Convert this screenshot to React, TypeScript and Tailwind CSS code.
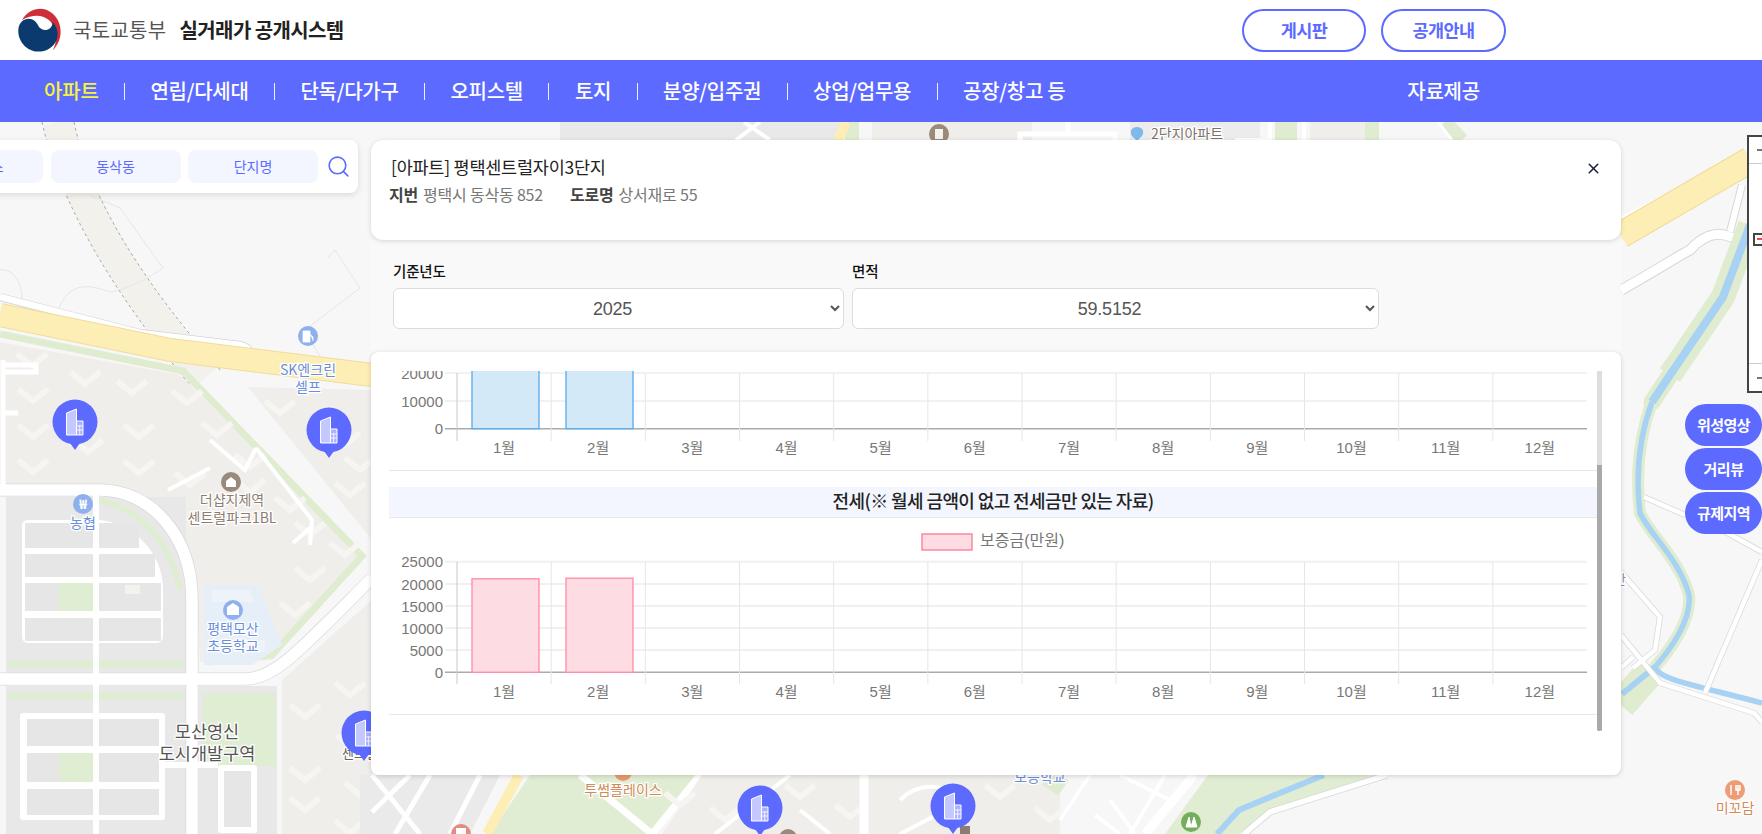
import { Search, X } from 'lucide-react';

const navItems = ['연립/다세대', '단독/다가구', '오피스텔', '토지', '분양/입주권', '상업/업무용', '공장/창고 등'];
const months = ['1월', '2월', '3월', '4월', '5월', '6월', '7월', '8월', '9월', '10월', '11월', '12월'];

const chevrons = [
  [32, 361], [85, 379], [132, 388], [33, 396], [33, 432], [139, 432], [33, 467], [139, 468], [88, 447],
  [187, 398], [217, 430], [250, 462], [190, 480], [250, 487], [290, 505], [310, 530], [345, 550], [310, 575],
  [295, 610], [345, 440], [360, 465], [350, 490], [280, 408], [305, 712], [350, 690], [305, 775], [352, 742],
  [305, 805], [360, 790], [350, 828], [680, 800], [725, 815], [800, 792], [850, 812], [1000, 792], [1050, 815], [1115, 795],
];

const cellRows = [
  { y: 523, h: 25 },
  { y: 554, h: 23 },
  { y: 583, h: 28 },
  { y: 618, h: 23 },
];
const lowerRows = [
  { y: 719, h: 27 },
  { y: 753, h: 29 },
  { y: 789, h: 26 },
];

const rightRoads = 'M1644 497 L1685 515 M1722 530 L1762 552 M1762 560 L1705 693 M1621 572 L1660 617 L1655 650 L1633 668 M1621 635 L1660 683 L1754 713 L1762 722 M1621 668 L1633 657';

function Pin({ x, y }: { x: number; y: number }) {
  return (
    <g transform={`translate(${x} ${y})`}>
      <path d="M-5 21 L0 28 L5 21 Z" fill="#5c6aff" />
      <ellipse rx="22.5" ry="22.5" fill="#5c6aff" />
      <path d="M-8.5 -9 L1.5 -13 L1.5 13 L-8.5 13 Z" fill="#c3c9ff" stroke="#fff" />
      <path d="M1.5 -1 L8 -1 L8 13 L1.5 13 Z" fill="#aab2ff" stroke="#fff" />
      <path d="M4.7 3 V13 M1.5 4 H8 M1.5 8 H8" stroke="#fff" strokeWidth="0.8" />
    </g>
  );
}

function MapLabel({ x, y, color, size = 14, children }: { x: number; y: number; color: string; size?: number; children: string }) {
  return (
    <text x={x} y={y} fill={color} fontSize={size} textAnchor="middle" stroke="#fff" strokeWidth={2.5} paintOrder="stroke">
      {children}
    </text>
  );
}

function MapBackground() {
  return (
    <svg
      viewBox="0 122 1762 712"
      className="absolute inset-0 h-[712px] w-[1762px] font-['Noto_Sans_CJK_KR',sans-serif]"
    >
      <rect x="0" y="122" width="1762" height="712" fill="#f7f7f7" />

      {/* 왼쪽 위 산길 */}
      <path d="M58 122 C75 200 130 290 205 378" fill="none" stroke="#f2f1ec" strokeWidth="30" />
      <path d="M42 122 C60 205 115 295 190 385" fill="none" stroke="#a8a8a8" strokeWidth="1" strokeDasharray="3 3" />
      <path d="M74 122 C90 200 145 285 222 372" fill="none" stroke="#a8a8a8" strokeWidth="1" strokeDasharray="3 3" />
      <path d="M0 270 C15 268 22 285 22 300 M58 310 C70 280 90 285 110 292 C135 288 160 270 163 268 L120 208 L90 195" fill="none" stroke="#e6e6e6" />
      <path d="M305 330 L360 288 L335 250 L330 255 L328 258 M305 330 L322 360" fill="none" stroke="#e6e6e6" />

      {/* 아파트 단지 */}
      <path d="M0 342 L180 375 L362 556 L272 660 L200 662 L196 580 L165 520 L105 487 L0 487 Z" fill="#f0eeeb" />
      <path d="M248 387 L372 390 L372 540 Z" fill="#f0eeeb" />
      <path d="M282 680 L372 600 L372 834 L282 834 Z" fill="#f0eeeb" />
      <path d="M0 334 L183 371 L362 556 L272 655 L208 662" fill="none" stroke="#dfeccf" strokeWidth="7" />

      {/* 건물 */}
      {chevrons.map(([x, y]) => (
        <path
          key={`${x}-${y}`}
          d={`M${x - 15} ${y - 7} L${x} ${y + 5} L${x + 15} ${y - 7}`}
          fill="none"
          stroke="#f6f5f2"
          strokeWidth="6"
        />
      ))}

      {/* 왼쪽 아래 구역 */}
      <rect x="6" y="497" width="180" height="177" fill="#e8e8e8" />
      <rect x="6" y="686" width="180" height="148" fill="#e8e8e8" />
      <rect x="199" y="686" width="78" height="148" fill="#e8e8e8" />
      <rect x="203" y="693" width="73" height="73" fill="#dfeed2" />
      <path d="M8 664 H183 M8 696 H183" stroke="#dfeed2" strokeWidth="7" />
      <path d="M99 500 C140 510 170 540 180 590" fill="none" stroke="#dfeed2" strokeWidth="6" />
      <path d="M204 585 L258 585 L282 645 L252 665 L204 665 Z" fill="#e6eef7" />
      <path d="M212 590 H250 L254 602 H212 Z M235 640 H265 V652 H235 Z" fill="#eef3f9" />

      {/* 큰 길 */}
      <path d="M0 490 H100 C150 490 192 535 192 600 V834" fill="none" stroke="#d8d8d8" strokeWidth="13" />
      <path d="M0 679 H245 C275 679 300 650 372 578" fill="none" stroke="#dcdcdc" strokeWidth="13" />
      <path d="M0 490 H100 C150 490 192 535 192 600 V834" fill="none" stroke="#fff" strokeWidth="11.5" />
      <path d="M0 679 H245 C275 679 300 650 372 578" fill="none" stroke="#fff" strokeWidth="11.5" />
      <path d="M0 297 L140 333 L240 345 C248 347 250 350 251 356" fill="none" stroke="#d5d5d5" strokeWidth="8" />
      <path d="M0 297 L140 333 L240 345 C248 347 250 350 251 356" fill="none" stroke="#fff" strokeWidth="6.5" />
      <path d="M0 315 L170 350 L372 375" fill="none" stroke="#f0dc9c" strokeWidth="24" />
      <path d="M0 315 L170 350 L372 375" fill="none" stroke="#fdeeb5" strokeWidth="22" />
      <path d="M3 360 V490 M3 365 H36 V372 H3 M3 413 H18" fill="none" stroke="#fff" strokeWidth="5" />

      {/* 단지 안쪽 길 */}
      <path d="M168 490 L210 468 M210 440 L245 470 L256 448 M256 448 L312 520 L310 545 M310 528 L293 543" fill="none" stroke="#fff" strokeWidth="4" />

      {/* 블록 */}
      <path d="M28 520 H99 C130 522 163 550 163 590 V636 Q163 643 156 643 H28 Q22 643 22 636 V526 Q22 520 28 520 Z" fill="#fff" />
      {cellRows.map((r) => (
        <g key={r.y}>
          <rect x="25" y={r.y} width="68" height={r.h} fill="#e6e6e6" />
          <rect x="99" y={r.y} width={r.y === 523 ? 40 : r.y === 554 ? 56 : 62} height={r.h} fill="#e6e6e6" />
        </g>
      ))}
      <rect x="59" y="583" width="34" height="28" fill="#dfeed2" />
      <rect x="125" y="585" width="15" height="9" fill="#f4f2ee" />
      <rect x="20" y="713" width="145" height="107" rx="3" fill="#fff" />
      {lowerRows.map((r) => (
        <g key={r.y}>
          <rect x="27" y={r.y} width="66" height={r.h} fill="#e6e6e6" />
          <rect x="99" y={r.y} width="60" height={r.h} fill="#e6e6e6" />
        </g>
      ))}
      <rect x="59" y="753" width="34" height="29" fill="#dfeed2" />
      <path d="M96 490 V834" stroke="#fff" strokeWidth="6" />
      <rect x="218" y="765" width="39" height="68" rx="3" fill="#fff" />
      <rect x="224" y="771" width="27" height="56" fill="#e6e6e6" />
      <path d="M165 765 H218" stroke="#fff" strokeWidth="6" />

      {/* 위쪽 띠 */}
      <rect x="400" y="122" width="190" height="18" fill="#f7f7f7" />
      <rect x="560" y="122" width="280" height="18" fill="#e9e9e9" />
      <path d="M744 122 L770 140 M760 122 L736 140" stroke="#fff" strokeWidth="4" />
      <rect x="845" y="122" width="14" height="18" fill="#dfeccf" />
      <path d="M846 122 L838 140" stroke="#fdeeb5" strokeWidth="10" />
      <rect x="872" y="122" width="160" height="18" fill="#f0eeeb" />
      <path d="M1020 140 V134 H1115 V140 M1068 122 V134" fill="none" stroke="#fff" strokeWidth="5" />
      <rect x="1130" y="122" width="130" height="18" fill="#ececec" />
      <path d="M1235 140 H1270 M1270 122 V140 M1304 122 V140" stroke="#fff" strokeWidth="4" />
      <rect x="1275" y="122" width="22" height="18" fill="#dfeccf" />
      <rect x="1365" y="122" width="14" height="18" fill="#dfeccf" />
      <rect x="1310" y="122" width="55" height="18" fill="#f0eeeb" />
      <path d="M1445 122 L1462 140" stroke="#dfeccf" strokeWidth="14" />
      <path d="M1438 122 L1452 140" stroke="#fff" strokeWidth="3" />
      <circle cx="939" cy="134" r="10" fill="#9a8a7c" />
      <rect x="935" y="129" width="8" height="10" fill="#f3f1ee" />
      <path d="M1137 127 C1142 127 1145 131 1142 136 L1137 141 L1132 136 C1129 131 1132 127 1137 127 Z" fill="#7fb9ea" />
      <MapLabel x={1187} y={139} color="#7d7268">2단지아파트</MapLabel>

      {/* 오른쪽 지도 */}
      <path d="M1621 290 C1640 280 1680 255 1690 250 C1710 228 1725 232 1747 245" fill="none" stroke="#d8d8d8" strokeWidth="11" />
      <path d="M1621 290 C1640 280 1680 255 1690 250 C1710 228 1725 232 1747 245" fill="none" stroke="#fff" strokeWidth="9" />
      <path d="M1730 232 L1742 185" fill="none" stroke="#d8d8d8" strokeWidth="8" />
      <path d="M1730 232 L1742 185" fill="none" stroke="#fff" strokeWidth="6" />
      <path d="M1621 220 L1665 198 L1690 210" fill="none" stroke="#fff" strokeWidth="7" />
      <path d="M1621 235 L1750 160" fill="none" stroke="#f0dc9c" strokeWidth="27" />
      <path d="M1621 235 L1750 160" fill="none" stroke="#fdeeb5" strokeWidth="25" />
      <path d="M1750 225 L1723 297 L1670 375" fill="none" stroke="#dfeccf" strokeWidth="24" strokeLinejoin="round" />
      <path d="M1670 375 L1652 402" fill="none" stroke="#dfeccf" strokeWidth="17" strokeLinecap="round" />
      <path d="M1652 402 C1638 440 1636 480 1640 513 C1650 535 1680 560 1689 595 C1692 620 1670 650 1655 667 L1622 700" fill="none" stroke="#dfeccf" strokeWidth="12" strokeLinejoin="round" strokeLinecap="round" />
      <path d="M1621 705 L1650 672" stroke="#dfeccf" strokeWidth="30" />
      <path d="M1750 225 L1723 297 L1670 375 L1652 402" fill="none" stroke="#a8d2f3" strokeWidth="8" strokeLinejoin="round" />
      <path d="M1652 402 C1638 440 1636 480 1640 513 C1650 535 1680 560 1689 595 C1692 620 1670 650 1655 667 C1660 680 1690 684 1762 703" fill="none" stroke="#a8d2f3" strokeWidth="5.5" strokeLinejoin="round" />
      <path d="M1655 667 L1622 694" stroke="#a8d2f3" strokeWidth="6" />
      <path d={rightRoads} fill="none" stroke="#d8d8d8" strokeWidth="6" />
      <path d={rightRoads} fill="none" stroke="#fff" strokeWidth="4.5" />

      {/* 아래쪽 띠 */}
      <path d="M360 775 H500 L470 834 H360 Z" fill="#eaeaea" />
      <path d="M372 775 L420 834 M430 775 L395 834 M480 775 L450 834 M410 775 L372 812" stroke="#fff" strokeWidth="5" />
      <path d="M530 775 H580 L650 834 H490 Z" fill="#e1edd2" />
      <path d="M580 775 H700 L655 834 H650 Z" fill="#e1edd2" />
      <path d="M519 775 L487 834" stroke="#fdeeb5" strokeWidth="10" />
      <path d="M580 775 L652 834 M700 775 L652 834" fill="none" stroke="#fff" strokeWidth="7" />
      <path d="M702 775 H1190 L1145 834 H662 Z" fill="#f0eeeb" />
      {chevrons.slice(-7).map(([x, y]) => (
        <path key={`b${x}`} d={`M${x - 15} ${y - 7} L${x} ${y + 5} L${x + 15} ${y - 7}`} fill="none" stroke="#f6f5f2" strokeWidth="6" />
      ))}
      <path d="M864 775 V834" stroke="#fff" strokeWidth="9" />
      <path d="M790 775 L715 834 M800 810 L830 834 M900 800 C920 780 950 785 965 800 L900 834" fill="none" stroke="#fff" strokeWidth="4" />
      <rect x="1060" y="775" width="130" height="59" fill="#f7f7f7" />
      <path d="M1090 775 L1060 820 M1120 775 L1170 800 M1110 800 L1135 834 M1095 815 L1120 834 M1165 775 L1130 834" fill="none" stroke="#fff" strokeWidth="4" />
      <path d="M1208 775 H1380 L1275 808 L1240 834 H1165 Z" fill="#e1edd2" />
      <path d="M1194 775 L1145 834" stroke="#fff" strokeWidth="9" />
      <path d="M1387 775 L1270 812 L1244 834" fill="none" stroke="#d8d8d8" strokeWidth="7" />
      <path d="M1387 775 L1270 812 L1244 834" fill="none" stroke="#fff" strokeWidth="5.5" />
      <path d="M1324 775 L1275 795 L1239 810 L1217 834" fill="none" stroke="#a8d2f3" strokeWidth="6" />
      <path d="M1060 775 L1050 790" stroke="#dfeccf" strokeWidth="20" />

      {/* 아이콘, 지명 */}
      <circle cx="308" cy="336" r="10" fill="#8fb0ee" />
      <path d="M303 331 H310 V342 H303 Z M310 334 L313 337 V341" fill="#fff" stroke="#fff" strokeWidth="0.8" />
      <MapLabel x={308} y={375} color="#6a8ed8">SK엔크린</MapLabel>
      <MapLabel x={308} y={392} color="#6a8ed8">셀프</MapLabel>
      <circle cx="83" cy="504" r="10" fill="#8fb0ee" />
      <text x="83" y="509" fill="#fff" fontSize="13" fontWeight="700" textAnchor="middle">₩</text>
      <MapLabel x={83} y={528} color="#6a8ed8">농협</MapLabel>
      <circle cx="231" cy="482" r="10" fill="#9a8a7c" />
      <path d="M226 481 L231 477 L236 481 V487 H226 Z" fill="#fff" />
      <MapLabel x={232} y={505} color="#8c7d70">더샵지제역</MapLabel>
      <MapLabel x={232} y={523} color="#8c7d70">센트럴파크1BL</MapLabel>
      <circle cx="233" cy="610" r="10" fill="#8fb0ee" />
      <path d="M227 607 L233 603 L239 607 V615 H227 Z" fill="#fff" />
      <MapLabel x={233} y={634} color="#6a8ed8">평택모산</MapLabel>
      <MapLabel x={233} y={651} color="#6a8ed8">초등학교</MapLabel>
      <MapLabel x={207} y={738} color="#555" size={17.5}>모산영신</MapLabel>
      <MapLabel x={207} y={760} color="#555" size={17.5}>도시개발구역</MapLabel>
      <MapLabel x={360} y={758} color="#666" size={13}>센트럴</MapLabel>
      <circle cx="623" cy="772" r="9" fill="#ea9a6e" />
      <MapLabel x={623} y={795} color="#d08b58">투썸플레이스</MapLabel>
      <MapLabel x={1040} y={782} color="#6a8ed8">보등학교</MapLabel>
      <MapLabel x={1620} y={584} color="#8c8ca8" size={13}>만</MapLabel>
      <circle cx="461" cy="834" r="10" fill="#e58a80" />
      <rect x="456" y="828" width="10" height="8" fill="#fff" />
      <circle cx="788" cy="838" r="9" fill="#9a8a7c" />
      <rect x="960" y="826" width="10" height="8" fill="#8c7d70" />
      <circle cx="1191" cy="822" r="10" fill="#74ad5c" />
      <path d="M1186 827 L1189 817 L1191 827 Z M1191 827 L1194 817 L1197 827 Z" fill="#fff" stroke="#fff" />
      <circle cx="1735" cy="790" r="10" fill="#ee9c74" />
      <path d="M1731 785 V795 M1738 785 V795 M1736 785 V790 H1740 V785" fill="none" stroke="#fff" strokeWidth="1.5" />
      <MapLabel x={1735} y={813} color="#d08b58">미꼬담</MapLabel>

      <Pin x={75} y={422} />
      <Pin x={329} y={430} />
      <Pin x={364} y={733} />
      <Pin x={760} y={808} />
      <Pin x={953} y={806} />
    </svg>
  );
}

function ChartGrid({
  top,
  height,
  zero,
  ticks,
  bars,
  fill,
  stroke,
  tickY,
  labelY,
  gridClass,
  children,
}: {
  top: number;
  height: number;
  zero: number;
  ticks: { label: string; y: number }[];
  bars: number[];
  fill: string;
  stroke: string;
  tickY: number;
  labelY: number;
  gridClass: number;
  children?: React.ReactNode;
}) {
  const gridTop = ticks[ticks.length - 1].y;
  return (
    <svg
      viewBox={`389 ${top} 1208 ${height}`}
      style={{ height }}
      className="block w-[1208px] font-['Liberation_Sans','Noto_Sans_CJK_KR',sans-serif]"
    >
      {children}
      {ticks.map((t) => (
        <g key={t.label}>
          <path d={`M445 ${t.y} H1587`} stroke={t.label === '0' ? '#ababab' : gridClass === 2 ? '#f0f0f0' : '#e4e4e4'} strokeWidth={t.label === '0' ? 1.5 : gridClass} />
          <text x="443" y={t.y + 5.5} fill="#777" fontSize="15" textAnchor="end">
            {t.label}
          </text>
        </g>
      ))}
      {months.map((m, i) => {
        const x = 457 + i * 94.17;
        return (
          <g key={m}>
            <path d={`M${x} ${gridTop} V${tickY}`} stroke={i === 0 ? '#c8c8c8' : '#e6e6e6'} />
            <text x={x + 47} y={labelY} fill="#777" fontSize="15" textAnchor="middle">
              {m}
            </text>
          </g>
        );
      })}
      {bars.map((y, i) => (
        <rect
          key={i}
          x={472 + i * 94}
          y={y}
          width={67}
          height={zero - y}
          fill={fill}
          stroke={stroke}
          strokeWidth="1.4"
        />
      ))}
    </svg>
  );
}

export default function App() {
  return (
    <div className="flex h-[834px] w-full flex-col overflow-hidden bg-white font-['Noto_Sans_CJK_KR',sans-serif]">
      <header className="flex h-[60px] items-center bg-white pl-[16px] pr-[256px]">
        <svg viewBox="0 0 100 100" className="h-[46px] w-[46px]">
          <path d="M13 28 C26 6 48 0 66 6 C86 14 98 34 97 56 C96 72 90 84 80 94 C88 78 90 62 84 46 C76 24 50 8 13 28 Z" fill="#cd2e3a" />
          <path d="M5 52 C5 38 12 28 24 26 C36 24 44 32 48 40 C53 50 66 53 74 46 C79 41 80 36 79 32 C90 44 93 58 89 70 C82 88 66 97 48 97 C24 96 5 76 5 52 Z" fill="#0b3b6e" />
        </svg>
        <span className="ml-[11px] text-[20px] tracking-[0.3px] text-[#555]">국토교통부</span>
        <span className="ml-[13px] text-[20px] font-bold tracking-[-0.6px] text-[#222]">실거래가 공개시스템</span>
        <div className="ml-auto flex gap-[15px]">
          <button className="h-[43px] w-[124px] rounded-full border-2 border-[#5c6aff] bg-white text-[17.5px] font-bold tracking-[-0.6px] text-[#5c6aff]">
            게시판
          </button>
          <button className="h-[43px] w-[125px] rounded-full border-2 border-[#5c6aff] bg-white text-[17.5px] font-bold tracking-[-0.6px] text-[#5c6aff]">
            공개안내
          </button>
        </div>
      </header>

      <nav className="flex h-[62px] items-center bg-[#5c6aff] pl-[18px] pr-[282px] text-[20px] font-medium leading-none text-white">
        <span className="w-[106px] px-[26px] whitespace-nowrap tracking-[-0.2px] text-[#f5f53c]">아파트</span>
        {navItems.map((item) => (
          <div key={item} className="flex items-center">
            <span className="h-[17px] w-px bg-white/90" />
            <span className="px-[25.5px] whitespace-nowrap tracking-[-0.3px]">{item}</span>
          </div>
        ))}
        <span className="ml-auto tracking-[-0.2px]">자료제공</span>
      </nav>

      <main className="relative flex-1 overflow-hidden">
        <MapBackground />

        <div className="absolute inset-0 flex items-start pt-[18px]">
          <div className="-ml-[110px] flex h-[53px] w-[468px] shrink-0 items-center gap-[7.5px] rounded-lg bg-white pl-[23px] shadow-[0_2px_6px_rgba(0,0,0,0.12)]">
            {['아파트스', '동삭동', '단지명'].map((label) => (
              <div key={label} className="flex h-[33px] w-[130px] items-center justify-center rounded-lg bg-[#f3f6ff] text-[14px] text-[#5c6aff]">
                {label}
              </div>
            ))}
            <Search size={25} strokeWidth={1.5} className="text-[#5c6aff]" />
          </div>

          <div className="ml-[13px] flex w-[1250px] shrink-0 flex-col">
            <section className="relative z-10 flex h-[100px] justify-between rounded-xl bg-white pl-[20px] pr-[19px] pt-[15px] shadow-[0_1px_5px_rgba(0,0,0,0.14)]">
              <div>
                <h1 className="text-[17.5px] leading-6 tracking-[-0.25px] text-[#222]">[아파트] 평택센트럴자이3단지</h1>
                <p className="-ml-[2px] mt-[3px] flex text-[16px] leading-6 tracking-[-0.2px] text-[#777]">
                  <b className="mr-[5px] font-bold text-[#444]">지번</b>
                  평택시 동삭동 852
                  <b className="ml-[27px] mr-[5px] font-bold text-[#444]">도로명</b>
                  상서재로 55
                </p>
              </div>
              <X size={17} strokeWidth={2.2} className="mt-[5px] text-[#1b2640]" />
            </section>

            <section className="h-[112px] bg-[#f9f9f9] px-[22px] pt-[22px]">
              <div className="flex gap-[8px]">
                <label className="block w-[451px] text-[14.5px] font-medium leading-[18px] tracking-[-0.2px] text-[#111]">
                  기준년도
                  <select className="mt-[8px] block h-[41px] w-full rounded-md border border-[#dcdcdc] bg-white text-center text-[18px] font-normal text-[#555] font-['Liberation_Sans',sans-serif]">
                    <option>2025</option>
                  </select>
                </label>
                <label className="block w-[527px] text-[14.5px] font-medium leading-[18px] tracking-[-0.2px] text-[#111]">
                  면적
                  <select className="mt-[8px] block h-[41px] w-full rounded-md border border-[#dcdcdc] bg-white text-center text-[18px] font-normal text-[#555] font-['Liberation_Sans',sans-serif]">
                    <option>59.5152</option>
                  </select>
                </label>
              </div>
            </section>

            <section className="h-[423px] rounded-lg bg-white pl-[18px] pt-[19px] shadow-[0_1px_5px_rgba(0,0,0,0.16)]">
              <div className="flex h-[360px] w-[1213px] overflow-hidden">
                <div className="w-[1208px]">
                  <div className="h-[100px] border-b border-[#e8e8e8]">
                    <ChartGrid
                      top={371}
                      height={98}
                      zero={428.7}
                      ticks={[
                        { label: '0', y: 428.7 },
                        { label: '10000', y: 401 },
                        { label: '20000', y: 373 },
                      ]}
                      bars={[330, 330]}
                      fill="#d4e9f8"
                      stroke="#5eb0ee"
                      tickY={441}
                      labelY={453}
                      gridClass={1}
                    />
                  </div>
                  <div className="mt-[16px] flex h-[31px] items-center justify-center border-b border-[#e8e8e8] bg-[#f3f6ff] pb-[3px] text-[18px] font-medium tracking-[-0.6px] text-[#222]">
                    전세(※ 월세 금액이 없고 전세금만 있는 자료)
                  </div>
                  <div className="h-[197px] border-b border-[#e8e8e8]">
                    <ChartGrid
                      top={518}
                      height={196}
                      zero={672.3}
                      ticks={[
                        { label: '0', y: 672.3 },
                        { label: '5000', y: 650 },
                        { label: '10000', y: 628 },
                        { label: '15000', y: 606 },
                        { label: '20000', y: 584 },
                        { label: '25000', y: 561.7 },
                      ]}
                      bars={[578.8, 578.2]}
                      fill="#fddde3"
                      stroke="#ff8fa8"
                      tickY={684}
                      labelY={697}
                      gridClass={2}
                    >
                      <rect x="922" y="534" width="50" height="16" fill="#fddde3" stroke="#ff7f9b" strokeWidth="1.4" />
                      <text x="980" y="546" fill="#777" fontSize="16">보증금(만원)</text>
                    </ChartGrid>
                  </div>
                </div>
                <div className="h-[360px] w-[5px] shrink-0 bg-[#dedede]">
                  <div className="mt-[94px] h-[266px] rounded-b-sm bg-[#a9a9a9]" />
                </div>
              </div>
            </section>
          </div>
        </div>

        <div className="absolute right-0 top-[13px] flex h-[258px] w-[15px] flex-col border-2 border-r-0 border-[#444] bg-white">
          <div className="flex h-[27px] items-center justify-end border-b border-[#ccc]">
            <span className="h-[2px] w-[5px] bg-[#777]" />
          </div>
          <div className="flex flex-1 items-center justify-end pb-[49px]">
            <span className="flex h-[13px] w-[9px] items-center justify-end border-2 border-r-0 border-[#444]">
              <span className="h-[2px] w-[5px] bg-[#f0484f]" />
            </span>
          </div>
          <div className="flex h-[28px] items-center justify-end border-t border-[#ccc]">
            <span className="h-[2px] w-[5px] bg-[#777]" />
          </div>
        </div>

        <div className="absolute right-0 top-[282px] flex flex-col gap-[2px]">
          {['위성영상', '거리뷰', '규제지역'].map((label) => (
            <button key={label} className="h-[42px] w-[77px] rounded-full bg-[#5c6aff] text-[15px] font-bold tracking-[-0.5px] text-white">
              {label}
            </button>
          ))}
        </div>
      </main>
    </div>
  );
}
